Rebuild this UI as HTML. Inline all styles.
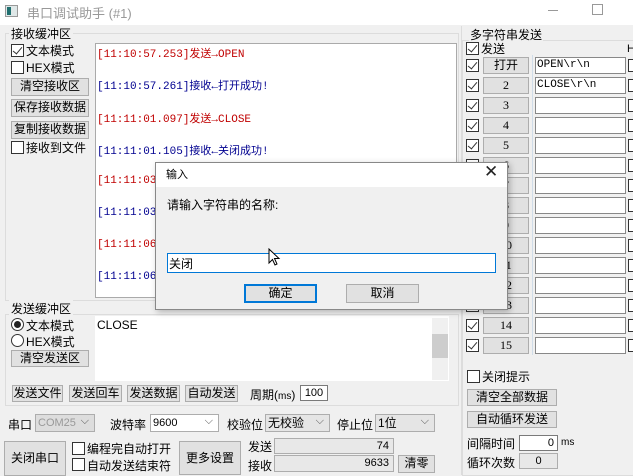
<!DOCTYPE html><html><head><meta charset="utf-8"><style>
*{box-sizing:border-box;margin:0;padding:0}
body{width:633px;height:475px;background:#f0f0f0;position:relative;overflow:hidden;font-family:"Liberation Sans","Noto Sans CJK SC",sans-serif;font-size:12px;color:#000}
.a{position:absolute;white-space:nowrap}
.btn{position:absolute;background:#e1e1e1;border:1px solid #adadad;text-align:center;line-height:15px;font-size:12px}
.cb{position:absolute;width:13px;height:13px;border:1px solid #333;background:#fff}
.cb.k:after{content:"";position:absolute;left:3px;top:0px;width:4px;height:8px;border:solid #333;border-width:0 1.5px 1.5px 0;transform:rotate(40deg)}
.in{position:absolute;background:#fff;border:1px solid #7a7a7a}
.grp{position:absolute;border:1px solid #dcdcdc}
.mono{font-family:"Liberation Mono","Noto Sans CJK SC",monospace;font-size:11px}
.r{color:#c00000}.b{color:#000090}
.cmb{position:absolute;border:1px solid #adadad;background:#fff;line-height:16px;padding-left:2px}
.cmb:after{content:"⌵";position:absolute;right:5px;top:-2px;color:#555;font-size:11px}
</style></head><body>
<div class="a" style="left:0;top:0;width:633px;height:25px;background:#fff"></div>
<div class="a" style="left:5px;top:5px;width:13px;height:12px;border:1px solid #999;background:#dfe8e8"><div style="position:absolute;left:1px;top:1px;width:4px;height:8px;background:#1f6f6f"></div></div>
<div class="a" style="left:27px;top:3px;color:#999;font-size:13px">串口调试助手 (#1)</div>
<div class="a" style="left:548px;top:10px;width:10px;border-top:1px solid #999"></div>
<div class="a" style="left:592px;top:4px;width:11px;height:11px;border:1px solid #999"></div>

<div class="grp" style="left:5px;top:33px;width:454px;height:268px"></div>
<div class="a" style="left:9px;top:25px;background:#f0f0f0;padding:0 2px">接收缓冲区</div>
<div class="cb k" style="left:11px;top:44px"></div><div class="a" style="left:26px;top:42px">文本模式</div>
<div class="cb" style="left:11px;top:61px"></div><div class="a" style="left:26px;top:59px">HEX模式</div>
<div class="btn" style="left:11px;top:78px;width:78px;height:18px">清空接收区</div>
<div class="btn" style="left:11px;top:99px;width:78px;height:18px">保存接收数据</div>
<div class="btn" style="left:11px;top:121px;width:78px;height:18px">复制接收数据</div>
<div class="cb" style="left:11px;top:141px"></div><div class="a" style="left:26px;top:139px">接收到文件</div>
<div class="a" style="left:95px;top:43px;width:362px;height:255px;background:#fff;border:1px solid #aaa"></div>
<div class="a mono r" style="left:97px;top:45px">[11:10:57.253]发送→OPEN</div>
<div class="a mono b" style="left:97px;top:77px">[11:10:57.261]接收←打开成功!</div>
<div class="a mono r" style="left:97px;top:110px">[11:11:01.097]发送→CLOSE</div>
<div class="a mono b" style="left:97px;top:142px">[11:11:01.105]接收←关闭成功!</div>
<div class="a mono r" style="left:97px;top:175px">[11:11:03.</div>
<div class="a mono b" style="left:97px;top:207px">[11:11:03.</div>
<div class="a mono r" style="left:97px;top:239px">[11:11:06.</div>
<div class="a mono b" style="left:97px;top:271px">[11:11:06.</div>

<div class="grp" style="left:5px;top:314px;width:454px;height:92px"></div>
<div class="a" style="left:9px;top:300px;background:#f0f0f0;padding:0 2px">发送缓冲区</div>
<div class="a" style="left:11px;top:318px;width:13px;height:13px;border:1px solid #333;border-radius:50%;background:#fff"><div style="position:absolute;left:2px;top:2px;width:7px;height:7px;border-radius:50%;background:#222"></div></div>
<div class="a" style="left:26px;top:317px">文本模式</div>
<div class="a" style="left:11px;top:334px;width:13px;height:13px;border:1px solid #333;border-radius:50%;background:#fff"></div>
<div class="a" style="left:26px;top:333px">HEX模式</div>
<div class="btn" style="left:11px;top:350px;width:78px;height:17px">清空发送区</div>
<div class="a" style="left:95px;top:316px;width:354px;height:65px;background:#fff"></div>
<div class="a" style="left:97px;top:318px">CLOSE</div>
<div class="a" style="left:432px;top:318px;width:16px;height:62px;background:#f0f0f0"><div style="position:absolute;left:0;top:16px;width:16px;height:24px;background:#cdcdcd"></div></div>
<div class="btn" style="left:12px;top:385px;width:51px;height:17px">发送文件</div>
<div class="btn" style="left:69px;top:385px;width:53px;height:17px">发送回车</div>
<div class="btn" style="left:127px;top:385px;width:53px;height:17px">发送数据</div>
<div class="btn" style="left:185px;top:385px;width:53px;height:17px">自动发送</div>
<div class="a" style="left:250px;top:386px">周期(<span style="font-size:10px">ms</span>)</div>
<div class="in" style="left:300px;top:385px;width:28px;height:16px;font-size:11px;text-align:center;line-height:14px">100</div>

<div class="a" style="left:8px;top:416px">串口</div>
<div class="cmb" style="left:35px;top:414px;width:60px;height:18px;background:#ddd;color:#999;font-size:11px">COM25</div>
<div class="a" style="left:110px;top:416px">波特率</div>
<div class="cmb" style="left:150px;top:414px;width:69px;height:18px;font-size:11px">9600</div>
<div class="a" style="left:227px;top:416px">校验位</div>
<div class="cmb" style="left:265px;top:414px;width:65px;height:18px;background:#e5e5e5">无校验</div>
<div class="a" style="left:337px;top:416px">停止位</div>
<div class="cmb" style="left:375px;top:414px;width:60px;height:18px;background:#e5e5e5">1位</div>

<div class="btn" style="left:4px;top:441px;width:62px;height:35px;line-height:32px">关闭串口</div>
<div class="cb" style="left:72px;top:442px"></div><div class="a" style="left:87px;top:440px">编程完自动打开</div>
<div class="cb" style="left:72px;top:458px"></div><div class="a" style="left:87px;top:457px">自动发送结束符</div>
<div class="btn" style="left:179px;top:441px;width:62px;height:34px;line-height:32px">更多设置</div>
<div class="a" style="left:248px;top:438px">发送</div>
<div class="a" style="left:274px;top:438px;width:120px;height:16px;border:1px solid #adadad;background:#e8e8e8;text-align:right;padding-right:4px;font-size:11px;line-height:14px">74</div>
<div class="a" style="left:248px;top:457px">接收</div>
<div class="a" style="left:274px;top:455px;width:120px;height:17px;border:1px solid #adadad;background:#e8e8e8;text-align:right;padding-right:4px;font-size:11px;line-height:15px">9633</div>
<div class="btn" style="left:398px;top:455px;width:37px;height:18px">清零</div>

<div class="a" style="left:461px;top:26px;width:1px;height:449px;background:#dcdcdc"></div>
<div class="grp" style="left:462px;top:40px;width:180px;height:436px"></div>
<div class="a" style="left:469px;top:26px;background:#f0f0f0;padding:0 1px">多字符串发送</div>
<div class="cb k" style="left:466px;top:42px"></div><div class="a" style="left:481px;top:40px">发送</div>
<div class="a" style="left:627px;top:43px;font-size:11px">H</div>
<div class="a" style="left:532px;top:55px;width:1px;height:300px;background:#d0dce8"></div>
<div id="rows"></div>
<script>
var s='',labs=['打开','2','3','4','5','6','7','8','9','10','11','12','13','14','15'],vals=['OPEN\\r\\n','CLOSE\\r\\n'];
for(var i=0;i<15;i++){var y=57+i*20;
s+='<div class="cb k" style="left:466px;top:'+(y+2)+'px"></div>';
s+='<div class="btn" style="left:483px;top:'+y+'px;width:46px;height:17px;font-family:\'Liberation Serif\',\'Noto Sans CJK SC\',serif">'+labs[i]+'</div>';
s+='<div class="in mono" style="left:535px;top:'+y+'px;width:91px;height:17px;line-height:15px;padding-left:1px;border-color:#888">'+(vals[i]||'')+'</div>';
s+='<div class="cb" style="left:628px;top:'+(y+2)+'px"></div>';}
document.getElementById('rows').innerHTML=s;
</script>
<div class="cb" style="left:467px;top:370px"></div><div class="a" style="left:482px;top:368px">关闭提示</div>
<div class="btn" style="left:467px;top:389px;width:90px;height:17px">清空全部数据</div>
<div class="btn" style="left:467px;top:411px;width:90px;height:17px">自动循环发送</div>
<div class="a" style="left:467px;top:435px">间隔时间</div>
<div class="in" style="left:519px;top:435px;width:39px;height:16px;text-align:right;padding-right:3px;font-size:11px;line-height:14px">0</div>
<div class="a" style="left:561px;top:437px;font-size:10px">ms</div>
<div class="a" style="left:467px;top:454px">循环次数</div>
<div class="a" style="left:519px;top:453px;width:39px;height:16px;border:1px solid #adadad;background:#e8e8e8;text-align:center;font-size:11px;line-height:14px">0</div>

<div class="a" style="left:155px;top:162px;width:353px;height:148px;background:#f0f0f0;border:1px solid #888;box-shadow:2px 2px 6px rgba(0,0,0,.25)"></div>
<div class="a" style="left:156px;top:163px;width:351px;height:24px;background:#fff"></div>
<div class="a" style="left:166px;top:166px;font-size:11px">输入</div>
<div class="a" style="left:484px;top:162px;font-size:17px;color:#222">✕</div>
<div class="a" style="left:167px;top:196px">请输入字符串的名称:</div>
<div class="a" style="left:167px;top:253px;width:329px;height:20px;background:#fff;border:1px solid #0078d7"></div>
<div class="a" style="left:169px;top:255px">关闭</div>
<svg class="a" style="left:268px;top:248px" width="14" height="20"><path d="M1 1 L1 15 L4.5 11.5 L7 17 L9 16 L6.5 10.5 L11 10.5 Z" fill="#fff" stroke="#000"/></svg>
<div class="btn" style="left:244px;top:284px;width:73px;height:19px;border:2px solid #0078d7;line-height:15px">确定</div>
<div class="btn" style="left:346px;top:284px;width:73px;height:19px;line-height:17px">取消</div>
</body></html>
